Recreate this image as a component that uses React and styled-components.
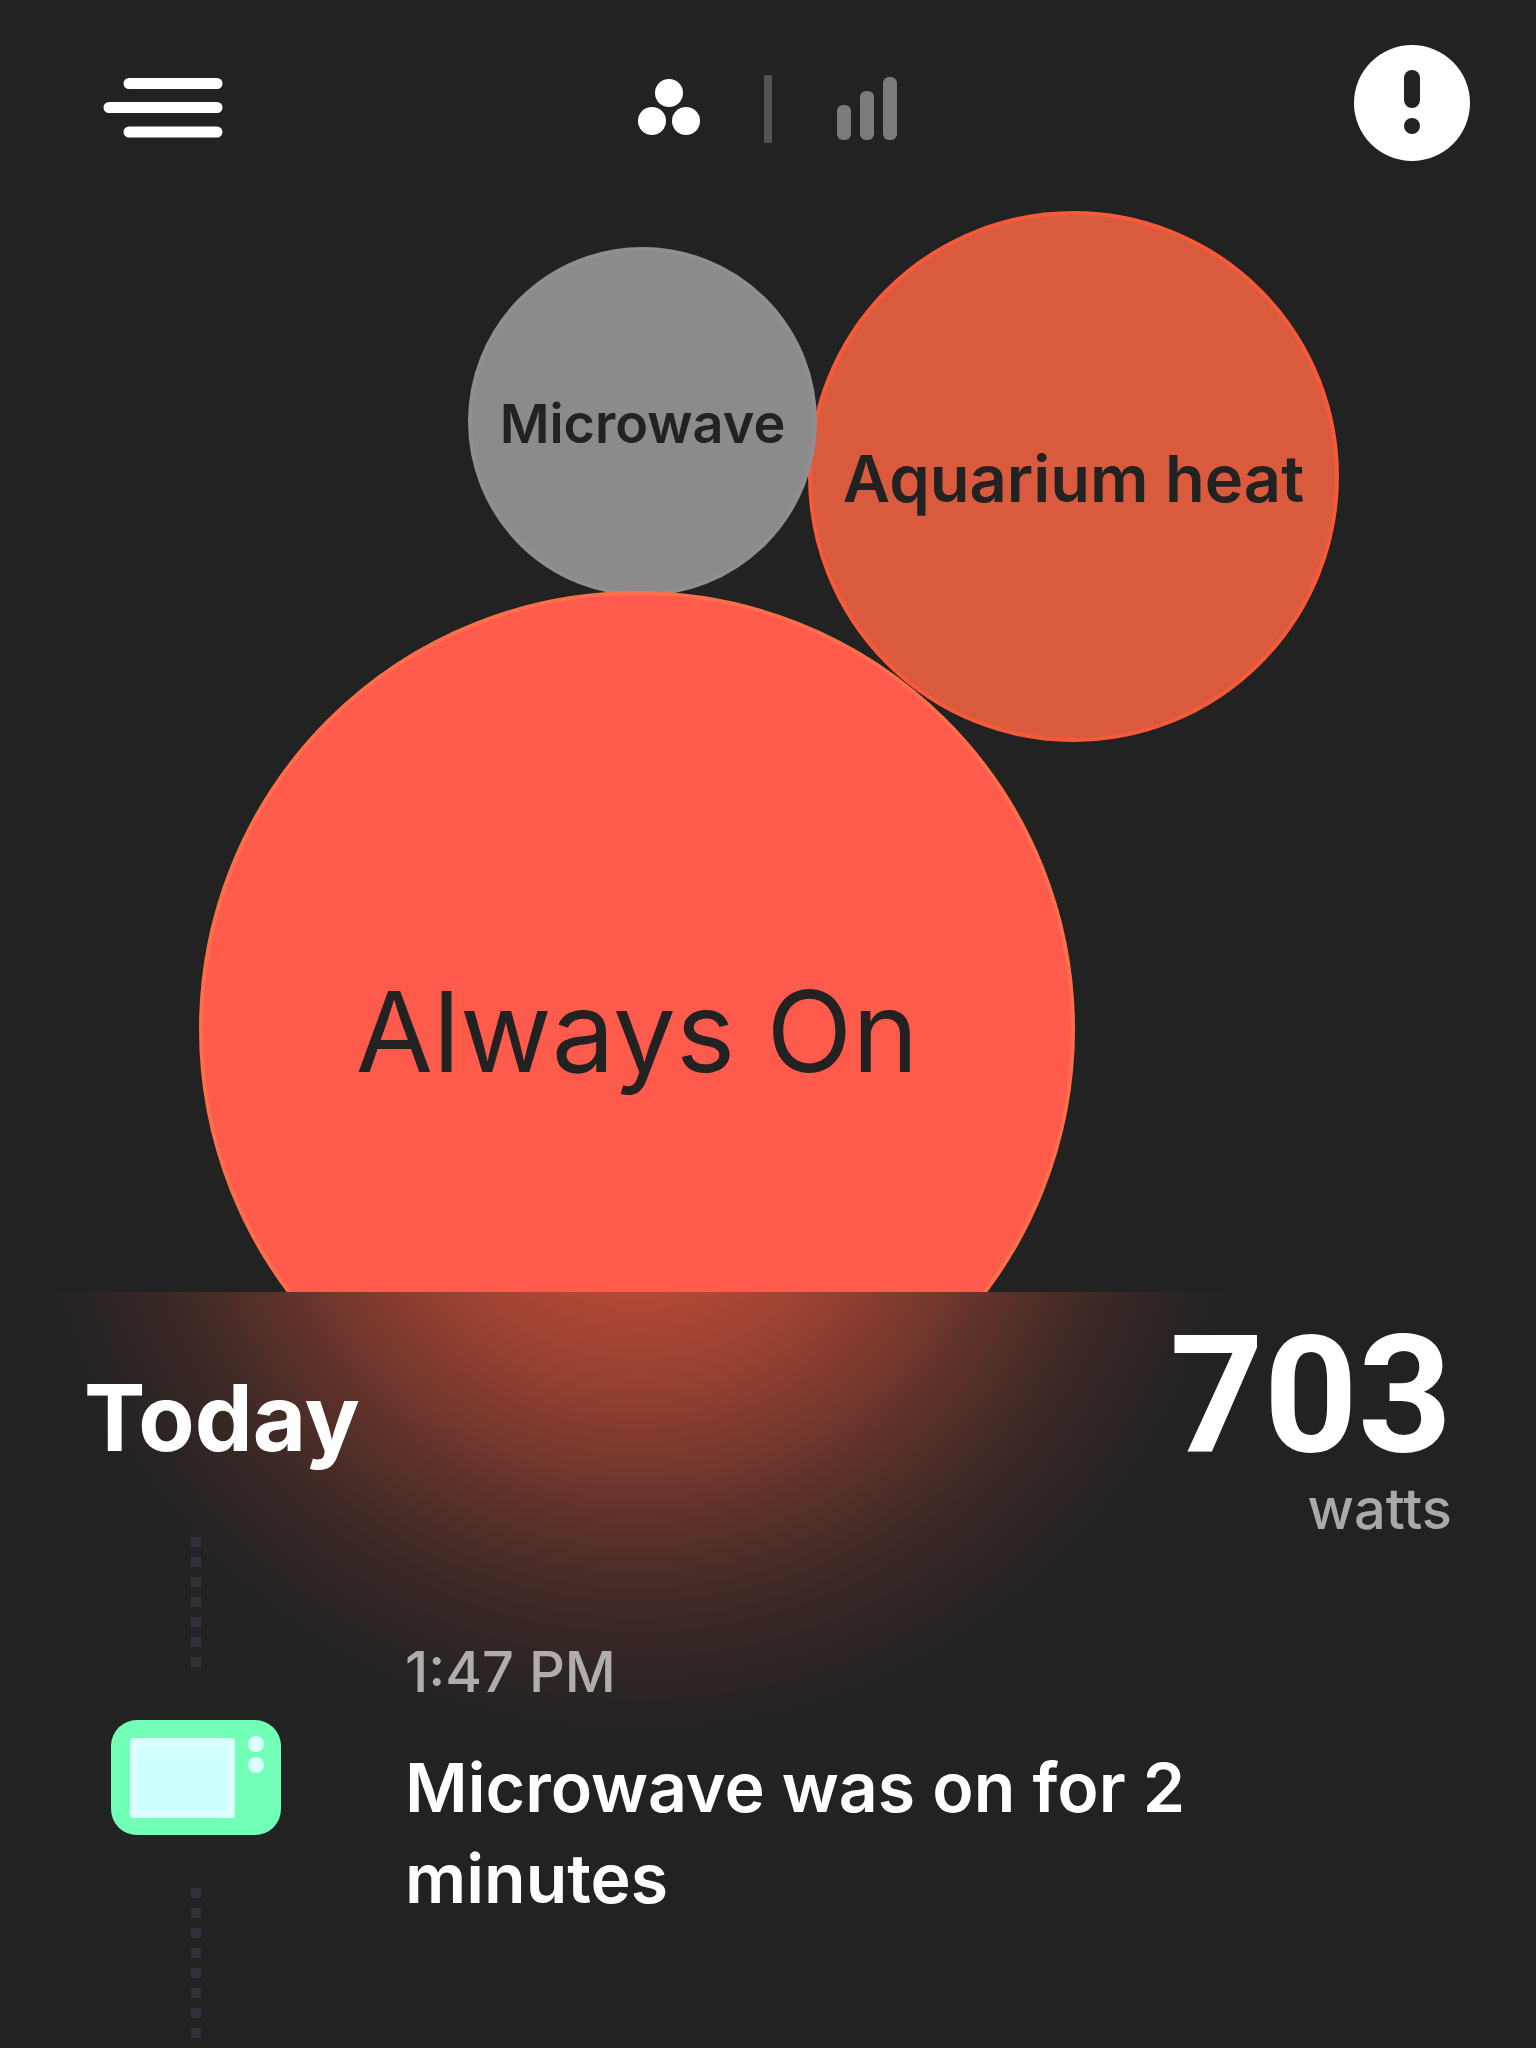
import React from "react";
import styled, { createGlobalStyle } from "styled-components";

const GlobalStyle = createGlobalStyle`
  *, *::before, *::after { box-sizing: border-box; }
  body {
    margin: 0;
    background: #222222;
    color: #ffffff;
    font-family: Inter, "Liberation Sans", sans-serif;
  }
  h2, p { margin: 0; }
`;

const Page = styled.main`
  display: flex;
  flex-direction: column;
  min-height: 100vh;
  overflow: hidden;
`;

const Header = styled.header`
  display: grid;
  grid-template-columns: 1fr auto 1fr;
  align-items: center;
  padding: 45px 66px 39px;
`;

const IconButton = styled.button`
  display: block;
  justify-self: ${(p) => p.$side || "auto"};
  padding: 0;
  border: 0;
  background: none;
  color: ${(p) => p.$tone || "#ffffff"};
  cursor: pointer;

  svg { display: block; }
`;

const ViewSwitch = styled.nav`
  display: flex;
  align-items: flex-end;
  gap: 64px;
`;

const Divider = styled.span`
  width: 8px;
  height: 68px;
  margin-bottom: 18px;
  border-radius: 2px;
  background: #535353;
`;

const Stage = styled.section`
  position: relative;
  width: 100%;
  aspect-ratio: 1536 / 1092;
  overflow: hidden;
`;

const Bubble = styled.button`
  position: absolute;
  left: ${(p) => (p.$x / 1536) * 100}%;
  top: ${(p) => (p.$y / 1092) * 100}%;
  width: ${(p) => (p.$size / 1536) * 100}%;
  aspect-ratio: 1;
  display: flex;
  align-items: center;
  justify-content: center;
  padding: 4px 0 0;
  border: 4px solid ${(p) => p.$rim};
  border-radius: 50%;
  background: ${(p) => p.$fill};
  color: #222222;
  font-family: inherit;
  font-size: ${(p) => p.$text}px;
  font-weight: ${(p) => p.$weight};
  line-height: 1;
  white-space: nowrap;
  cursor: pointer;
`;

const Feed = styled.section`
  flex: 1;
  display: flex;
  flex-direction: column;
  background: radial-gradient(
    circle 620px at 41.5% -163px,
    rgba(255, 92, 64, 0.9) 0%,
    rgba(255, 92, 64, 0.65) 27%,
    rgba(255, 92, 64, 0.53) 41%,
    rgba(255, 92, 64, 0.4) 53%,
    rgba(255, 92, 64, 0.28) 63%,
    rgba(255, 92, 64, 0.18) 72%,
    rgba(255, 92, 64, 0.11) 80%,
    rgba(255, 92, 64, 0.04) 91%,
    rgba(255, 92, 64, 0) 100%
  );
`;

const Summary = styled.div`
  display: flex;
  align-items: baseline;
  justify-content: space-between;
  padding: 23px 84px 0;
`;

const DayTitle = styled.h2`
  font-size: 92px;
  font-weight: 700;
  line-height: 120px;
`;

const Usage = styled.p`
  display: flex;
  flex-direction: column;
  align-items: flex-end;
  gap: 6px;
`;

const UsageValue = styled.span`
  font-family: Roboto, "Liberation Sans", sans-serif;
  font-size: 164px;
  font-weight: 700;
  line-height: 160px;
`;

const UsageUnit = styled.span`
  color: #a9a9a9;
  font-size: 56px;
  font-weight: 500;
  line-height: 56px;
`;

const Entry = styled.article`
  flex: 1;
  display: flex;
  gap: 124px;
  padding: 0 111px;
`;

const Rail = styled.div`
  display: flex;
  flex-direction: column;
  align-items: center;
  gap: 53px;
`;

const Dots = styled.span`
  width: 10px;
  height: ${(p) => (p.$grow ? "auto" : "130px")};
  flex: ${(p) => (p.$grow ? "1" : "none")};
  background: repeating-linear-gradient(#362f3b 0 10px, transparent 10px 20px);
`;

const EntryText = styled.div`
  display: flex;
  flex-direction: column;
  gap: 30px;
  padding-top: 95px;
`;

const EntryTime = styled.time`
  color: #b0adad;
  font-size: 56px;
  font-weight: 500;
  line-height: 80px;
`;

const EntryBody = styled.p`
  max-width: 820px;
  font-size: 68px;
  font-weight: 600;
  line-height: 91px;
`;

function MenuIcon() {
  return (
    <svg width="160" height="116" viewBox="0 0 160 116" stroke="currentColor" strokeWidth="11" strokeLinecap="round">
      <path d="M63 38.500H151M43 62.500H151M63 87H151" />
    </svg>
  );
}

function BubblesIcon() {
  return (
    <svg width="62" height="116" viewBox="0 0 62 116" fill="currentColor">
      <circle cx="31" cy="48" r="14" />
      <circle cx="14" cy="76" r="14" />
      <circle cx="48" cy="76" r="14" />
    </svg>
  );
}

function BarsIcon() {
  return (
    <svg width="62" height="116" viewBox="0 0 62 116" fill="currentColor">
      <rect x="1" y="60" width="14" height="35" rx="6" />
      <rect x="24" y="46" width="14" height="49" rx="6" />
      <rect x="47" y="32" width="14" height="63" rx="6" />
    </svg>
  );
}

function AlertIcon() {
  return (
    <svg width="116" height="116" viewBox="0 0 116 116">
      <circle cx="58" cy="58" r="58" fill="currentColor" />
      <rect x="50" y="25" width="16" height="38" rx="8" fill="#222222" />
      <circle cx="58" cy="81" r="8" fill="#222222" />
    </svg>
  );
}

function MicrowaveIcon() {
  return (
    <svg width="170" height="115" viewBox="0 0 170 115" aria-hidden="true">
      <rect width="170" height="115" rx="26" fill="#72ffb6" />
      <rect x="19" y="18" width="105" height="80" rx="3" fill="#dcffff" />
      <rect x="27" y="27" width="89" height="63" fill="#d0ffff" />
      <circle cx="145" cy="24" r="8" fill="#dcffff" />
      <circle cx="145" cy="45" r="8" fill="#dcffff" />
    </svg>
  );
}

const devices = [
  { name: "Aquarium heat", x: 808, y: 11, size: 531, fill: "#d95a3c", rim: "#f65a3b", text: 65, weight: 600 },
  { name: "Microwave", x: 468, y: 47, size: 349, fill: "#8b8b8b", rim: "#8f8f8f", text: 54, weight: 600 },
  { name: "Always On", x: 199, y: 391, size: 876, fill: "#ff5b4c", rim: "#ff6e4b", text: 112, weight: 400 },
];

export default function App() {
  return (
    <>
      <GlobalStyle />
      <Page>
        <Header>
          <IconButton $side="start" aria-label="Menu">
            <MenuIcon />
          </IconButton>
          <ViewSwitch aria-label="View">
            <IconButton aria-label="Bubbles" aria-pressed="true">
              <BubblesIcon />
            </IconButton>
            <Divider />
            <IconButton $tone="#7b7b7b" aria-label="Bars" aria-pressed="false">
              <BarsIcon />
            </IconButton>
          </ViewSwitch>
          <IconButton $side="end" aria-label="Alerts">
            <AlertIcon />
          </IconButton>
        </Header>

        <Stage aria-label="Devices">
          {devices.map((d) => (
            <Bubble
              key={d.name}
              $x={d.x}
              $y={d.y}
              $size={d.size}
              $fill={d.fill}
              $rim={d.rim}
              $text={d.text}
              $weight={d.weight}
            >
              {d.name}
            </Bubble>
          ))}
        </Stage>

        <Feed>
          <Summary>
            <DayTitle>Today</DayTitle>
            <Usage>
              <UsageValue>703</UsageValue>
              <UsageUnit>watts</UsageUnit>
            </Usage>
          </Summary>
          <Entry>
            <Rail>
              <Dots />
              <MicrowaveIcon />
              <Dots $grow />
            </Rail>
            <EntryText>
              <EntryTime>1:47 PM</EntryTime>
              <EntryBody>Microwave was on for 2 minutes</EntryBody>
            </EntryText>
          </Entry>
        </Feed>
      </Page>
    </>
  );
}
